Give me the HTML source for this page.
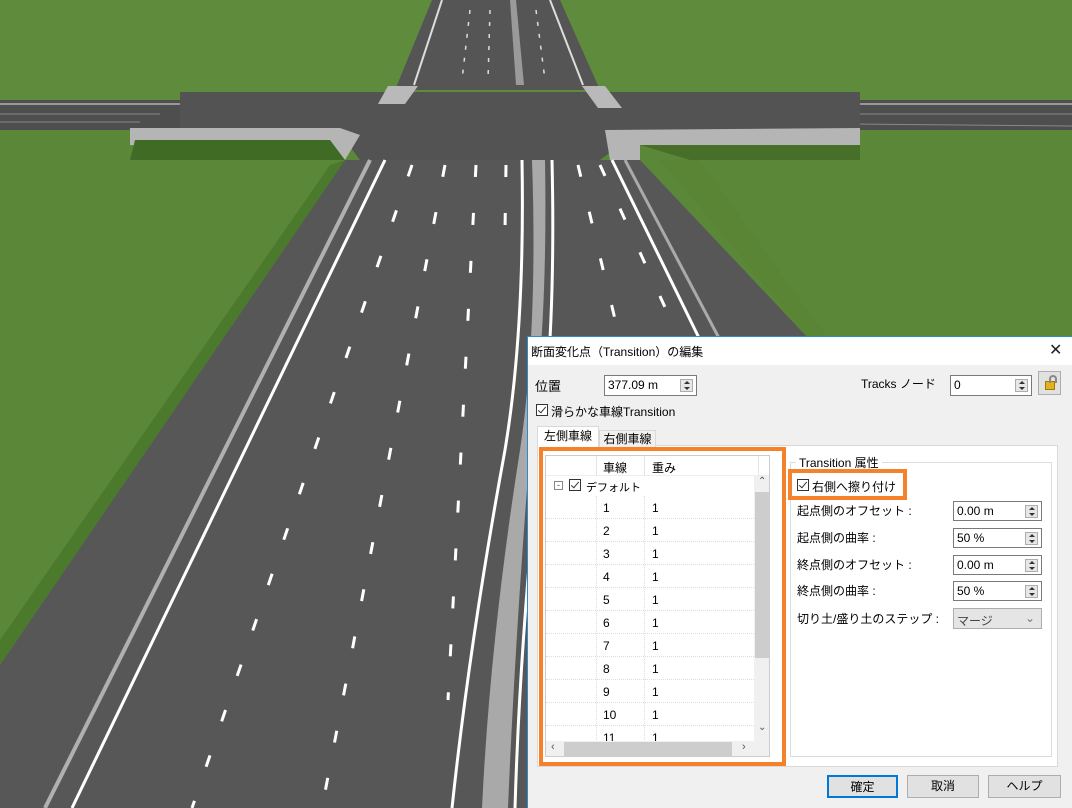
<!DOCTYPE html>
<html><head><meta charset="utf-8"><style>
*{box-sizing:border-box;margin:0;padding:0}
body{width:1072px;height:808px;overflow:hidden;position:relative;background:#5d8a3a;font-family:"Liberation Sans","Noto Sans CJK JP",sans-serif;font-size:12px;color:#000}
.a{position:absolute}
.inp{position:absolute;background:#fff;border:1px solid #7a7a7a;font-size:12px;padding:3px 0 0 3px;line-height:13px}
.spin{position:absolute;right:3px;top:3px;width:13px;height:13px;background:#e6e6e6;border:1px solid #adadad}
.spin:before{content:"";position:absolute;left:3px;top:1px;border:3px solid transparent;border-bottom:3px solid #333;border-top:0}
.spin:after{content:"";position:absolute;left:3px;bottom:1px;border:3px solid transparent;border-top:3px solid #333;border-bottom:0}
.cb{position:absolute;width:12px;height:12px;border:1px solid #333;background:#fff}
.cb:after{content:"";position:absolute;left:3px;top:0px;width:3px;height:7px;border:solid #333;border-width:0 1.5px 1.5px 0;transform:rotate(40deg)}
.row{position:absolute;left:0;width:208px;height:23px;border-bottom:1px dotted #ddd}
.row span{position:absolute;top:5px}
.btn{position:absolute;top:775px;height:23px;background:#e1e1e1;border:1px solid #adadad;text-align:center;line-height:20px}
</style></head><body>
<svg class="a" style="left:0;top:0" width="1072" height="808">
<rect width="1072" height="808" fill="#5b8838"/>
<rect width="1072" height="100" fill="#5f8c3c"/>
<!-- far road -->
<polygon points="432,0 560,0 600,90 395,90" fill="#555"/>
<line x1="442" y1="0" x2="414" y2="85" stroke="#ddd" stroke-width="2"/>
<line x1="550" y1="0" x2="583" y2="85" stroke="#ddd" stroke-width="2"/>
<polygon points="510,0 516,0 524,85 516,85" fill="#9a9a9a"/>
<line x1="470" y1="10" x2="462" y2="80" stroke="#ddd" stroke-width="1.5" stroke-dasharray="4 8"/>
<line x1="490" y1="10" x2="488" y2="80" stroke="#ddd" stroke-width="1.5" stroke-dasharray="4 8"/>
<line x1="536" y1="10" x2="545" y2="80" stroke="#ddd" stroke-width="1.5" stroke-dasharray="4 8"/>
<!-- cross road -->
<polygon points="0,100 1072,100 1072,130 0,130" fill="#4e4e4e"/>
<line x1="0" y1="104" x2="180" y2="104" stroke="#999" stroke-width="2"/>
<line x1="0" y1="114" x2="160" y2="114" stroke="#888" stroke-width="1"/>
<line x1="0" y1="122" x2="140" y2="122" stroke="#888" stroke-width="1"/>
<line x1="825" y1="104" x2="1072" y2="104" stroke="#999" stroke-width="2"/>
<line x1="835" y1="114" x2="1072" y2="114" stroke="#888" stroke-width="1"/>
<line x1="855" y1="124" x2="1072" y2="126" stroke="#888" stroke-width="1"/>
<polygon points="180,92 860,92 860,130 840,145 620,145 600,160 360,160 345,140 130,140 180,128" fill="#535353"/>
<polygon points="388,86 418,86 405,104 378,104" fill="#b9b9b9"/>
<polygon points="582,86 605,86 622,108 598,108" fill="#b9b9b9"/>
<polygon points="130,128 340,128 360,135 345,160 130,145" fill="#b5b5b5"/>
<polygon points="605,130 860,128 860,145 640,145 640,160 610,160" fill="#b5b5b5"/>
<polygon points="135,140 330,140 345,160 130,160" fill="#3f6b25"/>
<polygon points="640,145 860,145 860,160 690,160" fill="#476f2a"/>
<!-- near road -->
<polygon points="345,160 640,160 810,340 1072,560 1072,808 0,808 0,665" fill="#575757"/>
<polygon points="345,160 330,165 0,640 0,665" fill="#4c7a2c"/>
<polygon points="660,160 700,160 800,300 830,340 810,340" fill="#5a8535"/>
<line x1="370" y1="160" x2="45" y2="808" stroke="#b0b0b0" stroke-width="4"/>
<line x1="385" y1="160" x2="72" y2="808" stroke="#fff" stroke-width="3"/>
<line x1="412" y1="165" x2="192" y2="808" stroke="#fff" stroke-width="3" stroke-dasharray="12 36"/>
<line x1="445" y1="165" x2="322" y2="808" stroke="#fff" stroke-width="3" stroke-dasharray="12 36"/>
<line x1="476" y1="165" x2="448" y2="700" stroke="#fff" stroke-width="3" stroke-dasharray="12 36"/>
<line x1="506" y1="165" x2="505" y2="230" stroke="#fff" stroke-width="3" stroke-dasharray="12 36"/>
<path d="M522,160 Q525,330 505,450 Q470,640 452,808" stroke="#fff" stroke-width="3" fill="none"/>
<path d="M532,160 Q538,330 520,450 Q490,640 482,808 L508,808 Q515,640 530,450 Q548,330 545,160 Z" fill="#a9a9a9"/>
<path d="M552,160 Q556,330 540,450 Q520,640 515,808" stroke="#fff" stroke-width="3" fill="none"/>
<line x1="578" y1="165" x2="620" y2="340" stroke="#fff" stroke-width="3" stroke-dasharray="12 36"/>
<line x1="600" y1="165" x2="680" y2="340" stroke="#fff" stroke-width="3" stroke-dasharray="12 36"/>
<line x1="612" y1="160" x2="700" y2="340" stroke="#fff" stroke-width="3"/>
<line x1="625" y1="160" x2="720" y2="340" stroke="#aaa" stroke-width="3"/>
</svg>

<!-- dialog -->
<div class="a" style="left:527px;top:336px;width:545px;height:472px;background:#f0f0f0;border:1px solid #2b8bd0;border-bottom:0;border-right:0"></div>
<div class="a" style="left:528px;top:337px;width:544px;height:28px;background:#fff"></div>
<div class="a" style="left:531px;top:343px;font-size:12px">断面変化点（Transition）の編集</div>
<div class="a" style="left:1049px;top:340px;font-size:16px;color:#222">✕</div>

<div class="a" style="left:535px;top:376px;font-size:13px">位置</div>
<div class="inp" style="left:604px;top:375px;width:93px;height:21px">377.09 m<div class="spin"></div></div>
<div class="a" style="left:861px;top:375px;font-size:12px">Tracks ノード</div>
<div class="inp" style="left:950px;top:375px;width:82px;height:21px">0<div class="spin"></div></div>
<div class="a" style="left:1038px;top:371px;width:23px;height:24px;background:#e1e1e1;border:1px solid #adadad"><div class="a" style="left:6px;top:9px;width:10px;height:9px;background:#e2b21c;border:1px solid #a27b00"></div><div class="a" style="left:10px;top:3px;width:8px;height:8px;border:2px solid #888;border-bottom:0;border-radius:4px 4px 0 0"></div></div>

<div class="cb" style="left:536px;top:404px"></div>
<div class="a" style="left:551px;top:403px;font-size:12px">滑らかな車線Transition</div>

<div class="a" style="left:537px;top:445px;width:521px;height:322px;background:#fff;border:1px solid #d9d9d9"></div>
<div class="a" style="left:599px;top:430px;width:57px;height:17px;background:#f0f0f0;border:1px solid #d9d9d9;border-bottom:0;text-align:center;font-size:12px;line-height:16px">右側車線</div>
<div class="a" style="left:537px;top:426px;width:62px;height:21px;background:#fff;border:1px solid #d9d9d9;border-bottom:0;text-align:center;font-size:12px;line-height:18px">左側車線</div>

<div class="a" style="left:539px;top:447px;width:247px;height:319px;border:4px solid #f5822a"></div>
<div class="a" style="left:545px;top:455px;width:225px;height:302px;background:#fff;border:1px solid #ccc;overflow:hidden">
 <div class="a" style="left:0;top:0;width:224px;height:20px;border-bottom:1px solid #eee"></div>
 <div class="a" style="left:50px;top:0;height:20px;border-left:1px solid #e5e5e5"></div>
 <div class="a" style="left:98px;top:0;height:20px;border-left:1px solid #e5e5e5"></div>
 <div class="a" style="left:212px;top:0;height:20px;border-left:1px solid #e5e5e5"></div>
 <div class="a" style="left:57px;top:3px">車線</div>
 <div class="a" style="left:106px;top:3px">重み</div>
 <div class="a" style="left:8px;top:25px;width:9px;height:9px;border:1px solid #888;font-size:9px;line-height:7px;text-align:center;color:#444">-</div>
 <div class="cb" style="left:23px;top:23px"></div>
 <div class="a" style="left:40px;top:23px;font-size:11px">デフォルト</div>
 <div class="a" style="left:50px;top:40px;height:260px;border-left:1px dotted #ddd"></div>
 <div class="a" style="left:98px;top:40px;height:260px;border-left:1px dotted #ddd"></div>
 <div class="row" style="top:40px"><span style="left:57px">1</span><span style="left:106px">1</span></div>
 <div class="row" style="top:63px"><span style="left:57px">2</span><span style="left:106px">1</span></div>
 <div class="row" style="top:86px"><span style="left:57px">3</span><span style="left:106px">1</span></div>
 <div class="row" style="top:109px"><span style="left:57px">4</span><span style="left:106px">1</span></div>
 <div class="row" style="top:132px"><span style="left:57px">5</span><span style="left:106px">1</span></div>
 <div class="row" style="top:155px"><span style="left:57px">6</span><span style="left:106px">1</span></div>
 <div class="row" style="top:178px"><span style="left:57px">7</span><span style="left:106px">1</span></div>
 <div class="row" style="top:201px"><span style="left:57px">8</span><span style="left:106px">1</span></div>
 <div class="row" style="top:224px"><span style="left:57px">9</span><span style="left:106px">1</span></div>
 <div class="row" style="top:247px"><span style="left:57px">10</span><span style="left:106px">1</span></div>
 <div class="row" style="top:270px"><span style="left:57px">11</span><span style="left:106px">1</span></div>
 <div class="a" style="left:208px;top:20px;width:16px;height:265px;background:#f0f0f0"></div>
 <div class="a" style="left:209px;top:36px;width:14px;height:166px;background:#cdcdcd"></div>
 <div class="a" style="left:212px;top:20px;font-size:10px;color:#555">⌃</div>
 <div class="a" style="left:212px;top:266px;font-size:10px;color:#555">⌄</div>
 <div class="a" style="left:0;top:285px;width:224px;height:17px;background:#f0f0f0"></div>
 <div class="a" style="left:18px;top:286px;width:168px;height:14px;background:#cdcdcd"></div>
 <div class="a" style="left:5px;top:285px;font-size:11px;color:#555">‹</div>
 <div class="a" style="left:196px;top:285px;font-size:11px;color:#555">›</div>
</div>

<div class="a" style="left:790px;top:462px;width:262px;height:295px;border:1px solid #dcdcdc"></div>
<div class="a" style="left:796px;top:454px;background:#fff;padding:0 3px;font-size:12px">Transition 属性</div>
<div class="a" style="left:788px;top:469px;width:119px;height:31px;border:4px solid #f5822a;background:#fff"></div>
<div class="cb" style="left:797px;top:479px"></div>
<div class="a" style="left:812px;top:478px;font-size:12px">右側へ擦り付け</div>
<div class="a" style="left:797px;top:502px">起点側のオフセット :</div>
<div class="inp" style="left:953px;top:501px;width:89px;height:20px">0.00 m<div class="spin"></div></div>
<div class="a" style="left:797px;top:529px">起点側の曲率 :</div>
<div class="inp" style="left:953px;top:528px;width:89px;height:20px">50 %<div class="spin"></div></div>
<div class="a" style="left:797px;top:556px">終点側のオフセット :</div>
<div class="inp" style="left:953px;top:555px;width:89px;height:20px">0.00 m<div class="spin"></div></div>
<div class="a" style="left:797px;top:582px">終点側の曲率 :</div>
<div class="inp" style="left:953px;top:581px;width:89px;height:20px">50 %<div class="spin"></div></div>
<div class="a" style="left:797px;top:610px">切り土/盛り土のステップ :</div>
<div class="a" style="left:953px;top:608px;width:89px;height:21px;background:#e5e5e5;border:1px solid #adadad;padding:3px 0 0 3px;color:#444">マージ<span style="position:absolute;right:6px;top:2px;color:#777">⌄</span></div>

<div class="btn" style="left:827px;width:71px;border:2px solid #0078d7">確定</div>
<div class="btn" style="left:907px;width:72px">取消</div>
<div class="btn" style="left:988px;width:73px">ヘルプ</div>
</body></html>
